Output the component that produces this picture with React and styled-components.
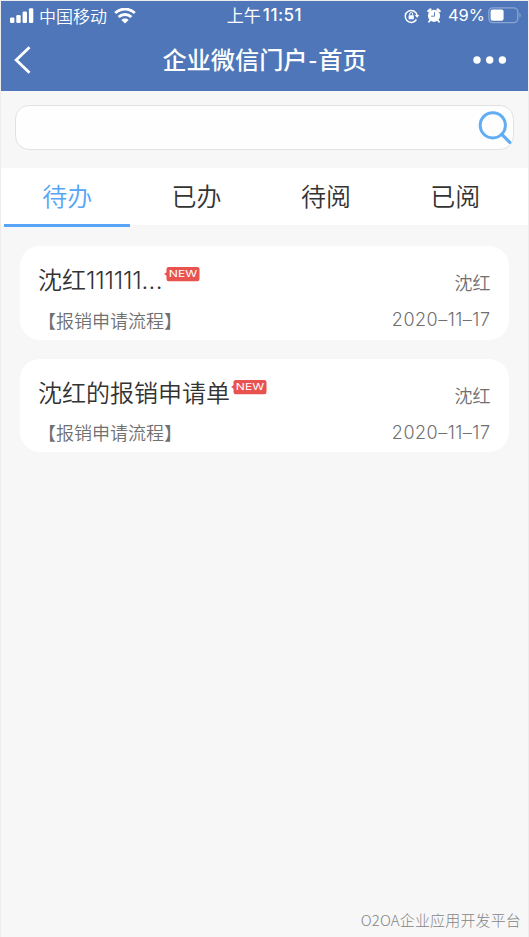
import React from 'react';
import styled, { createGlobalStyle } from 'styled-components';

const tabs = ['待办', '已办', '待阅', '已阅'];

const tasks = [
  {
    id: 1,
    title: '沈红',
    number: '111111',
    process: '【报销申请流程】',
    person: '沈红',
    date: '2020–11–17'
  },
  {
    id: 2,
    title: '沈红的报销申请单',
    process: '【报销申请流程】',
    person: '沈红',
    date: '2020–11–17'
  }
];

const SignalIcon = () => (
  <svg width="24" height="16" viewBox="0 0 24 16" fill="#fff">
    <rect x="0" y="9.4" width="4.4" height="5.6" rx="1.2" />
    <rect x="6.3" y="7" width="4.4" height="8" rx="1.2" />
    <rect x="12.6" y="3.4" width="4.4" height="11.6" rx="1.2" />
    <rect x="18.9" y="0.2" width="4.4" height="14.8" rx="1.2" />
  </svg>
);

const WifiIcon = () => (
  <svg width="22" height="16" viewBox="0 0 22 16" fill="none" stroke="#fff">
    <path d="M1.2 5C6.8-.2 15.2-.2 20.8 5" strokeWidth="2.9" />
    <path d="M4.6 9c3.7-3.4 9.1-3.4 12.8 0" strokeWidth="2.9" />
    <path d="M11 15.4l-3.6-3.5c2-1.8 5.2-1.8 7.2 0z" fill="#fff" stroke="none" />
  </svg>
);

const LockIcon = () => (
  <svg width="16" height="16" viewBox="0 0 16 16" fill="none" stroke="#fff">
    <path d="M12.4 11.5A6 6 0 1 1 13.1 7.2" strokeWidth="1.5" />
    <path d="M10.9 7h4.4l-2.2 3z" fill="#fff" stroke="none" />
    <rect x="4.6" y="7.2" width="5.2" height="4" rx=".5" fill="#fff" stroke="none" />
    <path d="M5.7 7.4V6a1.5 1.5 0 0 1 3 0v1.4" strokeWidth="1" />
  </svg>
);

const AlarmIcon = () => (
  <svg width="14" height="16" viewBox="0 0 14 16">
    <path d="M1.4 3.1 3.4 1.5M12.6 3.1 10.6 1.5" stroke="#fff" strokeWidth="2.4" strokeLinecap="round" />
    <path d="M3 12.4l-1 1.3M11 12.4l1 1.3" stroke="#fff" strokeWidth="1.8" strokeLinecap="round" />
    <circle cx="7" cy="7.8" r="6.1" fill="#fff" />
    <path d="M7.5 4.2v4H4.2" fill="none" stroke="#4e76b8" strokeWidth=".9" />
  </svg>
);

const BatteryIcon = () => (
  <svg width="34" height="17" viewBox="0 0 34 17">
    <rect x=".8" y=".8" width="29" height="14.8" rx="4" fill="none" stroke="#8ba5d2" strokeWidth="1.3" />
    <rect x="2.6" y="2.6" width="13" height="11.2" rx="2" fill="#fff" />
    <path d="M31.4 6v4.6c1.8-.6 1.8-4 0-4.6z" fill="#8ba5d2" />
  </svg>
);

const NewBadge = () => (
  <Badge width="36" height="15" viewBox="0 0 36 15">
    <path d="M0 7l4-2.4v4.8z" fill="#e9534f" />
    <rect x="2.5" y="0" width="33" height="14.2" rx="2.2" fill="#e9534f" />
    <text x="4.8" y="10.4" textLength="28.4" lengthAdjust="spacingAndGlyphs">
      NEW
    </text>
  </Badge>
);

const App = () => {
  return (
    <Screen>
      <GlobalStyle />
      <Header>
        <StatusBar>
          <Carrier>
            <SignalIcon />
            <span>中国移动</span>
            <WifiIcon />
          </Carrier>
          <Clock>
            <span>上午</span>
            <b>11:51</b>
          </Clock>
          <Power>
            <LockIcon />
            <AlarmIcon />
            <span>49%</span>
            <BatteryIcon />
          </Power>
        </StatusBar>
        <NavBar>
          <svg width="40" height="30" viewBox="0 0 40 30" fill="none" stroke="#fff" strokeWidth="2.8">
            <path d="M28.5 2.2 15.2 15l13.3 12.8" />
          </svg>
          <h1>
            企业微信门户<i>-</i>首页
          </h1>
          <svg width="34" height="8" viewBox="0 0 34 8" fill="#fff">
            <circle cx="4" cy="4" r="3.7" />
            <circle cx="16.7" cy="4" r="3.7" />
            <circle cx="29.4" cy="4" r="3.7" />
          </svg>
        </NavBar>
      </Header>
      <SearchBox>
        <input aria-label="搜索" />
        <svg width="34" height="34" viewBox="0 0 34 34" fill="none" stroke="#60adf6" strokeWidth="3">
          <circle cx="14.8" cy="14.3" r="12.6" />
          <path d="M23.8 23.3l8 8" strokeWidth="3.2" strokeLinecap="round" />
        </svg>
      </SearchBox>
      <Tabs>
        {tabs.map((tab, i) => (
          <Tab key={tab} $active={i === 0}>
            {tab}
          </Tab>
        ))}
      </Tabs>
      <List>
        {tasks.map(task => (
          <Card key={task.id}>
            <Row $height={41}>
              <Title>
                {task.title}
                {task.number && (
                  <>
                    <Digits>{task.number}</Digits>
                    <Dots>...</Dots>
                  </>
                )}
              </Title>
              <NewBadge />
              <Person>{task.person}</Person>
            </Row>
            <Row $height={39}>
              <Process>{task.process}</Process>
              <DateText>{task.date}</DateText>
            </Row>
          </Card>
        ))}
      </List>
      <Footer>O2OA企业应用开发平台</Footer>
    </Screen>
  );
};

const GlobalStyle = createGlobalStyle`
  * {
    box-sizing: border-box;
  }
  body {
    margin: 0;
    font-family: 'Noto Sans CJK SC', sans-serif;
  }
`;

const Screen = styled.div`
  display: flex;
  flex-direction: column;
  width: 529px;
  height: 937px;
  border: 1px solid #ededed;
  border-bottom: 0;
  background: #f7f7f7;
  overflow: hidden;
`;

const Header = styled.header`
  height: 90px;
  flex: none;
  background: #4e76b8;
  color: #fff;
`;

const StatusBar = styled.div`
  display: grid;
  grid-template-columns: 1fr auto 1fr;
  height: 29px;
  align-items: center;
  font-size: 17px;
  line-height: 27px;
  svg {
    display: block;
  }
`;

const Carrier = styled.div`
  display: flex;
  align-items: center;
  padding-left: 9px;
  span {
    margin: -1px 7px 0 5px;
    font-weight: 350;
  }
`;

const Clock = styled.div`
  display: flex;
  align-items: center;
  span {
    margin-top: -2px;
  }
  b {
    margin-left: 2px;
    font: 500 17px/27px Inter, sans-serif;
    letter-spacing: 0.5px;
  }
`;

const Power = styled.div`
  display: flex;
  align-items: center;
  justify-content: flex-end;
  padding-right: 6px;
  span {
    margin: 0 3px 0 7px;
    font: 400 16.5px/27px Inter, sans-serif;
  }
  svg:nth-child(2) {
    margin-left: 7px;
  }
`;

const NavBar = styled.div`
  display: grid;
  grid-template-columns: 80px 1fr 80px;
  align-items: center;
  height: 60px;
  h1 {
    margin: -2px 0 0;
    text-align: center;
    font-size: 24.2px;
    font-weight: 500;
    line-height: 36px;
  }
  i {
    margin: 0 1px;
    font-style: normal;
  }
  svg:last-child {
    margin-left: 25px;
  }
`;

const SearchBox = styled.div`
  display: flex;
  flex: none;
  align-items: center;
  width: 499px;
  height: 45px;
  margin: 14px 0 18px 14px;
  padding-right: 1px;
  border: 1.5px solid #e2e2e2;
  border-radius: 14px;
  background: #fefefe;
  input {
    flex: 1;
    height: 38px;
    margin-left: 10px;
    border: 0;
    outline: 0;
    background: transparent;
  }
`;

const Tabs = styled.nav`
  display: flex;
  flex: none;
  gap: 3px;
  height: 57px;
  padding-left: 3px;
  background: #fff;
`;

const Tab = styled.div`
  width: 126.4px;
  height: 59px;
  border-bottom: 3px solid ${props => (props.$active ? '#56a5f8' : 'transparent')};
  color: ${props => (props.$active ? '#56a5f8' : '#333')};
  font-size: 25px;
  font-weight: 350;
  line-height: 54px;
  text-align: center;
`;

const List = styled.main`
  display: flex;
  flex: 1;
  flex-direction: column;
  gap: 19px;
  padding: 21.3px 19px 0;
`;

const Card = styled.section`
  height: 93.5px;
  padding: 13px 18.5px 0 18px;
  border-radius: 20px;
  background: #fff;
`;

const Row = styled.div`
  display: flex;
  height: ${props => props.$height}px;
  align-items: center;
  white-space: nowrap;
`;

const Title = styled.div`
  color: #333;
  font-size: 24px;
  font-weight: 350;
  line-height: 36px;
`;

const Digits = styled.span`
  font: 300 24px/36px Inter, sans-serif;
  letter-spacing: -0.2px;
`;

const Dots = styled.span`
  font: 300 24px/36px Inter, sans-serif;
  letter-spacing: 0.3px;
`;

const Badge = styled.svg`
  margin: -10px 0 0 1px;
  text {
    fill: #fff;
    font: 400 9.6px Inter, sans-serif;
  }
`;

const Person = styled.div`
  margin: 5px 0 0 auto;
  color: #707070;
  font-size: 18px;
  font-weight: 350;
`;

const Process = styled.div`
  color: #707070;
  font-size: 18px;
  font-weight: 350;
`;

const DateText = styled.div`
  margin-left: auto;
  color: #707070;
  font: 300 18px Inter, sans-serif;
  letter-spacing: 0.5px;
`;

const Footer = styled.footer`
  padding: 0 7px 3px;
  color: #858585;
  font-size: 15px;
  font-weight: 300;
  line-height: 28px;
  letter-spacing: 0.15px;
  text-align: right;
`;

export default App;
